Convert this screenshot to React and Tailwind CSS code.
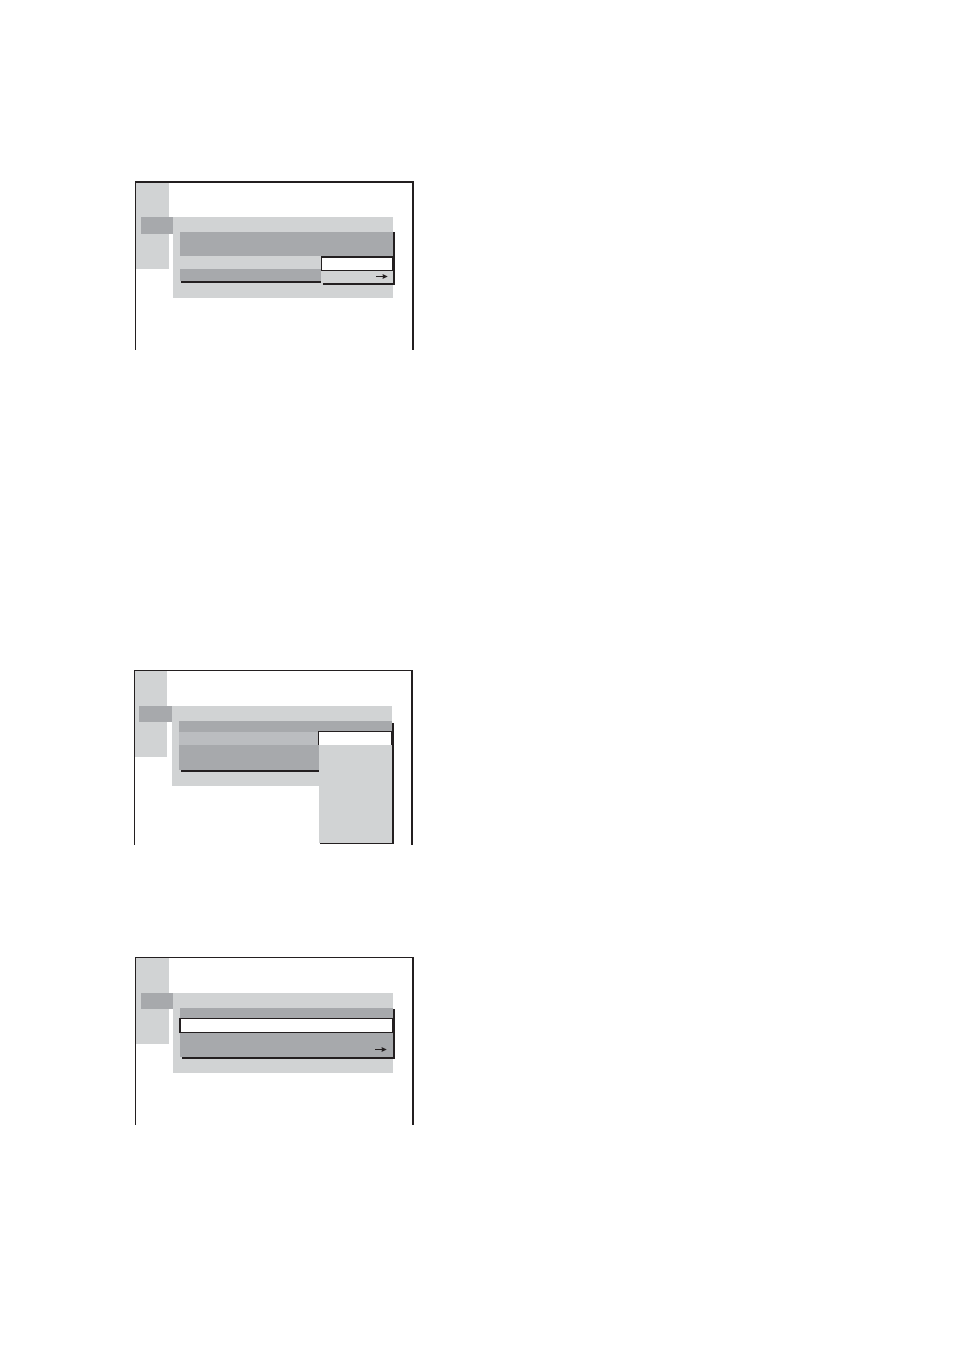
export default function App() {
  return (
    <main className="min-h-screen bg-white pt-[181px] pb-56 pl-[135px]">
      {/* Item list with a two-line option menu */}
      <Screen className="h-[169px] border-t-2" railClass="w-[33px]" tabClass="top-[34px] left-[5px] h-[17px] w-8">
        <Panel className="mt-[34px] ml-1 h-[81px]">
          <ItemList barClass="" lineClass="ml-px">
            <li className="h-6 bg-[#a7a9ac]" />
            <li className="h-[13px] bg-[#d1d3d4]" />
            <li className="h-3 bg-[#a7a9ac]" />
          </ItemList>
          <OptionMenu className="top-[39px] w-[74px]" lineClass="ml-[2px] h-[2px]">
            <li className="h-[15px] border border-t-2 border-[#231f20] bg-white" />
            <li className="flex h-3 items-start justify-end bg-[#d1d3d4] pt-[3px] pr-[5px]">
              <Arrow />
            </li>
          </OptionMenu>
        </Panel>
      </Screen>

      {/* Long option menu that runs past the panel */}
      <Screen className="mt-80 -ml-px h-[175px] border-t" railClass="w-8" tabClass="top-[35px] left-1 h-4 w-[33px]">
        <Panel className="mt-[35px] ml-[5px] h-20">
          <ItemList barClass="mt-[2px]" lineClass="ml-[2px]">
            <li className="h-[11px] bg-[#a7a9ac]" />
            <li className="h-[13px] bg-[#bbbdc0]" />
            <li className="h-[25px] bg-[#a7a9ac]" />
          </ItemList>
          <OptionMenu className="top-[25px] w-[76px]" lineClass="ml-[2px] h-px">
            <li className="h-[14px] border-x border-t border-[#231f20] bg-white" />
            <li className="ml-px h-[98px] bg-[#d1d3d4]" />
          </OptionMenu>
        </Panel>
      </Screen>

      {/* Item list with one row selected */}
      <Screen className="mt-28 h-[168px] border-t" railClass="w-[33px]" tabClass="top-[35px] left-[5px] h-4 w-8">
        <Panel className="mt-[35px] ml-1 h-20">
          <ItemList barClass="mt-px" lineClass="ml-[2px]">
            <li className="h-[10px] bg-[#a7a9ac]" />
            <li className="-ml-px h-[15px] border border-l-2 border-[#231f20] bg-white" />
            <li className="flex h-6 items-end justify-end bg-[#a7a9ac] pr-[6px] pb-[5px]">
              <Arrow />
            </li>
          </ItemList>
        </Panel>
      </Screen>
    </main>
  )
}

function Screen({ className, railClass, tabClass, children }) {
  return (
    <section className={`flex w-[279px] items-start border-r-2 border-l border-[#231f20] ${className}`}>
      <div className={`relative h-[86px] shrink-0 bg-[#d1d3d4] ${railClass}`}>
        <div className={`absolute bg-[#a7a9ac] ${tabClass}`} />
      </div>
      {children}
    </section>
  )
}

function Panel({ className, children }) {
  return (
    <div className={`relative mr-[19px] flex-1 bg-[#d1d3d4] pt-[15px] pl-[7px] ${className}`}>
      {children}
    </div>
  )
}

// Rows with a hard shadow on the right and bottom edges
function ItemList({ barClass, lineClass, children }) {
  return (
    <div className="-mr-[2px]">
      <div className="flex">
        <ul className="flex-1">{children}</ul>
        <div className={`w-[2px] bg-[#231f20] ${barClass}`} />
      </div>
      <div className={`h-[2px] bg-[#231f20] ${lineClass}`} />
    </div>
  )
}

function OptionMenu({ className, lineClass, children }) {
  return (
    <div className={`absolute -right-[2px] border-r-2 border-[#231f20] ${className}`}>
      <ul>{children}</ul>
      <div className={`bg-[#231f20] ${lineClass}`} />
    </div>
  )
}

function Arrow() {
  return (
    <svg width="12" height="5" viewBox="0 0 12 5" aria-hidden="true">
      <path d="M0 2h8v1H0z" fill="#231f20" />
      <path d="M6.5 0L11.8 2.5L6.5 5L7 2.5z" fill="#231f20" />
      <path d="M7 1h2v3H7z" fill="#231f20" />
    </svg>
  )
}
